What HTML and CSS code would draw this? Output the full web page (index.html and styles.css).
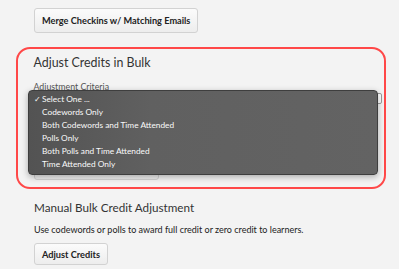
FILE: index.html
```html
<!DOCTYPE html>
<html lang="en">
<head>
    <meta charset="UTF-8">
    <meta name="viewport" content="width=device-width, initial-scale=1.0">
    <title>Credits</title>
    <link rel="stylesheet" href="styles.css">
</head>
<body>
    <div class="page">
        <button class="btn mergeBtn">Merge Checkins w/ Matching Emails</button>

        <div class="bulk">
            <h2 class="sectionTitle bulkTitle">Adjust Credits in Bulk</h2>
            <div class="fieldLabel">Adjustment Criteria</div>
            <div class="selectBox"></div>
            <button class="btn hiddenBtn"></button>

            <ul class="menu">
                <li class="menuItem"><span class="check">✓</span>Select One ...</li>
                <li class="menuItem">Codewords Only</li>
                <li class="menuItem">Both Codewords and Time Attended</li>
                <li class="menuItem">Polls Only</li>
                <li class="menuItem">Both Polls and Time Attended</li>
                <li class="menuItem">Time Attended Only</li>
            </ul>
        </div>

        <div class="manual">
            <h2 class="sectionTitle">Manual Bulk Credit Adjustment</h2>
            <p class="desc">Use codewords or polls to award full credit or zero credit to learners.</p>
            <button class="btn">Adjust Credits</button>
        </div>
    </div>
</body>
</html>
```

FILE: styles.css
```css
body {
    margin: 0;
    background-color: #f3f3f3;
    font-family: Lato, "Open Sans", sans-serif;
    color: #222;
}
.page {
    padding: 8px 0 0 34px;
}
.btn {
    display: block;
    height: 25px;
    padding: 0 7px;
    font-family: Lato, "Open Sans", sans-serif;
    font-size: 9.2px;
    font-weight: 700;
    color: #222;
    white-space: nowrap;
    background: linear-gradient(#fbfbfb, #ededed);
    border: 1px solid #d2d2d2;
    border-radius: 3px;
}
.mergeBtn {
    margin-bottom: 14px;
}
.bulk {
    position: relative;
    margin-left: -18px;
    width: 350.5px;
    height: 138px;
    padding-left: 15.5px;
    border: 2.5px solid #ff4848;
    border-radius: 14px;
}
.sectionTitle {
    margin: 0;
    height: 15px;
    line-height: 15px;
    font-size: 11.7px;
    font-weight: 400;
    color: #333;
}
.bulkTitle {
    margin-top: 6px;
    font-size: 12.4px;
}
.fieldLabel {
    margin-top: 11px;
    height: 11px;
    line-height: 11px;
    font-size: 8.8px;
    color: #555;
}
.selectBox {
    width: 346px;
    height: 9px;
    margin-top: 0.5px;
    background: #fff;
    border: 1px solid #9a9a9a;
    border-radius: 2px;
}
.hiddenBtn {
    width: 125px;
    height: 22px;
    margin-top: 54px;
}
.menu {
    position: absolute;
    left: 9.5px;
    top: 40.5px;
    width: 348px;
    height: 80.5px;
    margin: 0;
    padding: 2.5px 0 0;
    list-style: none;
    background: linear-gradient(90deg, #535353, #606060 35%, #636363);
    border: 1px solid #3e3e3e;
    border-radius: 4px;
    box-shadow: 0 2px 6px rgba(0, 0, 0, 0.3);
}
.menuItem {
    height: 13px;
    line-height: 13px;
    padding-left: 13.5px;
    font-size: 8.3px;
    color: #fafafa;
}
.check {
    display: inline-block;
    width: 8px;
    margin-left: -8px;
}
.manual {
    padding-top: 10.5px;
}
.desc {
    margin: 9px 0 8.5px;
    height: 11px;
    line-height: 11px;
    font-size: 9px;
    color: #222;
}
.manual .btn {
    height: 22px;
}
```
